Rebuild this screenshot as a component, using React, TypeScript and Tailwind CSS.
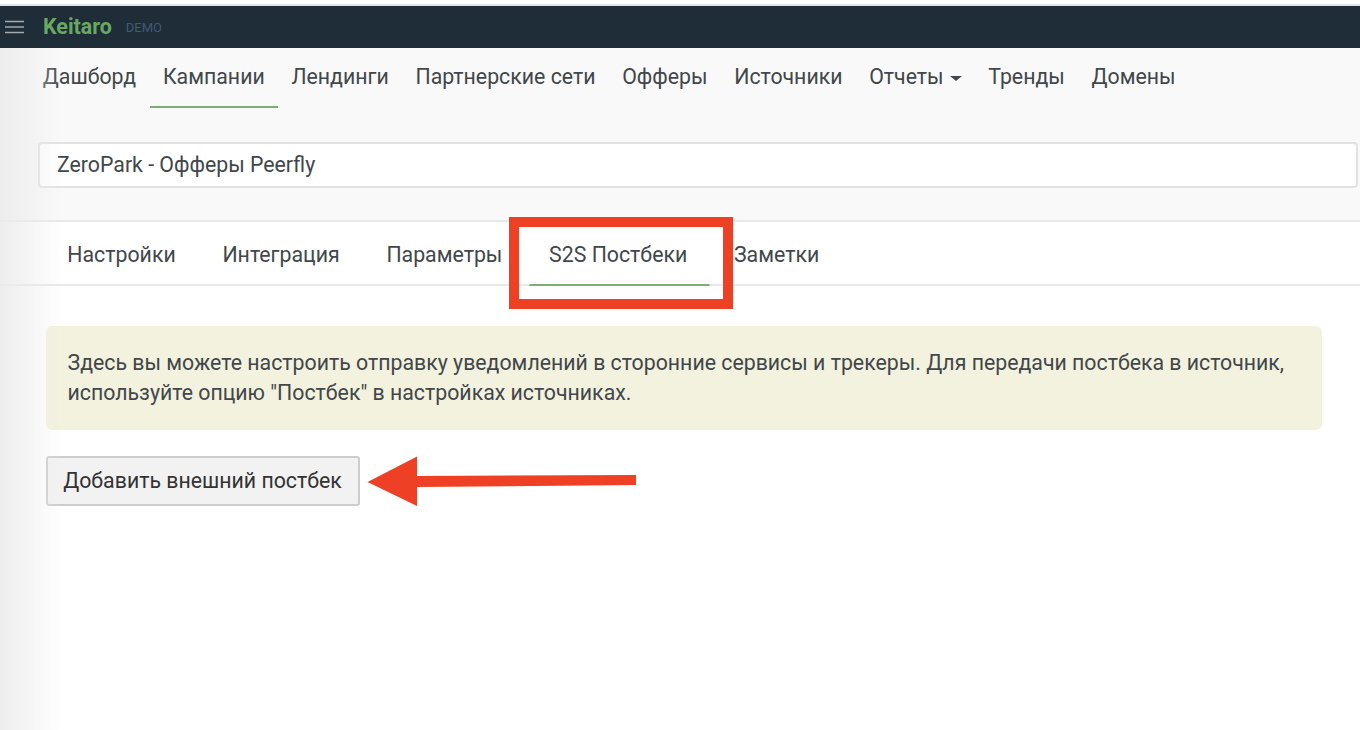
const nav = ["Дашборд", "Кампании", "Лендинги", "Партнерские сети", "Офферы", "Источники", "Отчеты", "Тренды", "Домены"];
const tabs = ["Настройки", "Интеграция", "Параметры", "S2S Постбеки", "Заметки"];

export default function App() {
  return (
    <div className="relative h-[730px] w-[1360px] overflow-hidden bg-white font-['Roboto',sans-serif] text-[#41474a]">
      <div className="h-[6px] border-b-2 border-[#e4e4e4] bg-white" />
      <header className="flex h-[42px] items-center bg-[#1f2d38] pl-[5px]">
        <svg width="20" height="14" viewBox="0 0 20 14" className="text-[#a3a9ad]">
          <path d="M0 1.5h19M0 7h19M0 12.5h19" stroke="currentColor" strokeWidth="1.6" />
        </svg>
        <span className="ml-[18px] text-[21.4px] font-bold leading-none text-[#69a860]">Keitaro</span>
        <span className="ml-[14px] mt-[2px] text-[13px] text-[#3f5a73]">DEMO</span>
      </header>
      <div className="bg-[#f9f9f9]">
        <nav className="flex h-[60px] pl-[29.5px]">
          {nav.map((n) => (
            <div key={n} className={`flex h-[60px] items-start whitespace-nowrap px-[13.35px] pt-[16px] text-[21.3px] leading-[26px] ${n === "Кампании" ? "border-b-2 border-[#7aae72]" : ""}`}>
              {n}
              {n === "Отчеты" && <span className="ml-[6px] mt-[12px] h-0 w-0 border-x-[6px] border-t-[5px] border-x-transparent border-t-[#41474a]" />}
            </div>
          ))}
        </nav>
        <div className="h-[112px] pl-[38px] pt-[34px]">
          <div className="flex h-[46px] w-[1320px] items-center rounded-[4px] border-2 border-[#e2e2e2] bg-white pl-[17px] text-[21.3px]">ZeroPark - Офферы Peerfly</div>
        </div>
      </div>
      <div className="flex h-[66px] border-y-2 border-[#e9e9e9] pl-[44px]">
        {tabs.map((t) => (
          <div key={t} className="relative flex h-[62px] items-start whitespace-nowrap px-[23.35px] pt-[20px] text-[21.3px] leading-[26px]">
            {t}
            {t === "S2S Постбеки" && <span className="absolute bottom-[-2px] left-[3.5px] right-[0.5px] h-[2px] rounded-t-[2px] bg-[#7aae72]" />}
          </div>
        ))}
      </div>
      <div className="pl-[46px] pt-[40px]">
        <div className="h-[104px] w-[1276px] rounded-[6px] bg-[#f3f2df] px-[21.5px] py-[22px] text-[21.3px] leading-[30px]">
          Здесь вы можете настроить отправку уведомлений в сторонние сервисы и трекеры. Для передачи постбека в источник, используйте опцию "Постбек" в настройках источниках.
        </div>
        <button className="mt-[26px] flex h-[50px] w-[314px] items-center justify-center rounded-[3px] border-2 border-[#cdcdcd] bg-[#f2f2f2] pr-[1px] text-[21.3px] text-[#333]">Добавить внешний постбек</button>
      </div>
      <div className="pointer-events-none absolute bottom-0 left-0 top-[48px] w-[62px] bg-gradient-to-r from-[#ebebeb] to-transparent opacity-90" />
      <div className="pointer-events-none absolute left-[509px] top-[217px] h-[92px] w-[224px] border-[10px] border-[#ee4024]" />
      <svg className="pointer-events-none absolute left-[365px] top-[455px]" width="275" height="54" viewBox="0 0 275 54">
        <path d="M2.5 27L52 1.5V21L271 20V30L52 32V51Z" fill="#ee4024" />
      </svg>
    </div>
  );
}
